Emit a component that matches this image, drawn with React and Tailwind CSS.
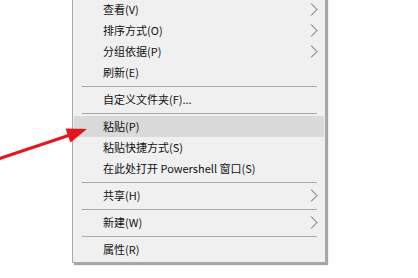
const items = [
  { label: '查看(V)', sub: true },
  { label: '排序方式(O)', sub: true },
  { label: '分组依据(P)', sub: true },
  { label: '刷新(E)' },
  'sep',
  { label: '自定义文件夹(F)...' },
  'sep',
  { label: '粘贴(P)', active: true },
  { label: '粘贴快捷方式(S)' },
  { label: '在此处打开 Powershell 窗口(S)' },
  'sep',
  { label: '共享(H)', sub: true },
  'sep',
  { label: '新建(W)', sub: true },
  'sep',
  { label: '属性(R)' },
];

function Chevron() {
  return (
    <svg width="8" height="13" viewBox="0 0 8 13" className="text-[#5a5a5a]">
      <path d="M1 0.5 L7 6.5 L1 12.5" fill="none" stroke="currentColor" strokeWidth="1" />
    </svg>
  );
}

export default function App() {
  return (
    <div className="relative w-[418px] h-[278px] overflow-hidden bg-white font-['Microsoft_YaHei','Noto_Sans_CJK_SC',sans-serif] text-[11px] text-[#111]">
      <div className="ml-[72px] -mt-[2px] w-[254px] pb-[2px] bg-[#f0f0f0] border border-[#a8a8a8] shadow-[2px_2px_1px_rgba(0,0,0,0.35)]">
        {items.map((it, i) =>
          it === 'sep' ? (
            <div key={i} className="h-[6px] flex items-center pl-[9px] pr-[8px]">
              <div className="h-px w-full bg-[#a9a9a9]" />
            </div>
          ) : (
            <div
              key={i}
              className={`h-[21px] mx-px flex items-center justify-between pl-[29px] pr-[6px] ${it.active ? 'bg-[#dadada]' : ''}`}
            >
              <span className="leading-none">{it.label}</span>
              {it.sub && <Chevron />}
            </div>
          )
        )}
      </div>
      <svg className="absolute left-0 top-0" width="418" height="278" viewBox="0 0 418 278">
        <line x1="-2" y1="159" x2="70" y2="135" stroke="#e8141a" strokeWidth="3" />
        <polygon points="87,129 65.5,128.5 70.5,142.5" fill="#e8141a" />
      </svg>
    </div>
  );
}
